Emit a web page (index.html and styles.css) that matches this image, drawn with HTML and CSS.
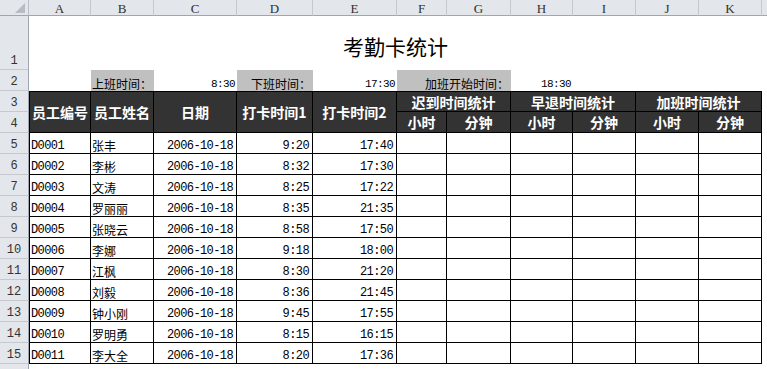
FILE: index.html
```html
<!DOCTYPE html>
<html lang="zh-CN">
<head>
<meta charset="utf-8">
<title>考勤卡统计</title>
<link rel="stylesheet" href="styles.css">
</head>
<body>
<div class="sheet">
  <!-- column headers -->
  <div class="corner"><span class="tri"></span></div>
  <div class="ch">A</div><div class="ch">B</div><div class="ch">C</div><div class="ch">D</div>
  <div class="ch">E</div><div class="ch">F</div><div class="ch">G</div><div class="ch">H</div>
  <div class="ch">I</div><div class="ch">J</div><div class="ch">K</div><div class="ch ch-end"></div>

  <!-- row 1 -->
  <div class="rh">1</div>
  <div class="title span11">考勤卡统计</div>
  <div class="blank"></div>

  <!-- row 2 -->
  <div class="rh">2</div>
  <div class="blank"></div>
  <div class="lbl left">上班时间：</div>
  <div class="val num right">8:30</div>
  <div class="lbl right">下班时间：</div>
  <div class="val num right">17:30</div>
  <div class="lbl right span2">加班开始时间：</div>
  <div class="val num ot">18:30</div>
  <div class="blank"></div><div class="blank"></div><div class="blank"></div>
  <div class="blank"></div>

  <!-- rows 3-4 header -->
  <div class="rh">3</div>
  <div class="hd hd-tall first">员工编号</div>
  <div class="hd hd-tall">员工姓名</div>
  <div class="hd hd-tall">日期</div>
  <div class="hd hd-tall">打卡时间1</div>
  <div class="hd hd-tall">打卡时间2</div>
  <div class="hd hd-top span2">迟到时间统计</div>
  <div class="hd hd-top span2">早退时间统计</div>
  <div class="hd hd-top span2">加班时间统计</div>
  <div class="blank rows2"></div>
  <div class="rh">4</div>
  <div class="hd">小时</div><div class="hd">分钟</div>
  <div class="hd">小时</div><div class="hd">分钟</div>
  <div class="hd">小时</div><div class="hd">分钟</div>

  <!-- data rows -->
  <div class="rh">5</div>
  <div class="td first num">D0001</div><div class="td">张丰</div><div class="td num right">2006-10-18</div><div class="td num right">9:20</div><div class="td num right">17:40</div>
  <div class="td"></div><div class="td"></div><div class="td"></div><div class="td"></div><div class="td"></div><div class="td"></div><div class="blank"></div>

  <div class="rh">6</div>
  <div class="td first num">D0002</div><div class="td">李彬</div><div class="td num right">2006-10-18</div><div class="td num right">8:32</div><div class="td num right">17:30</div>
  <div class="td"></div><div class="td"></div><div class="td"></div><div class="td"></div><div class="td"></div><div class="td"></div><div class="blank"></div>

  <div class="rh">7</div>
  <div class="td first num">D0003</div><div class="td">文涛</div><div class="td num right">2006-10-18</div><div class="td num right">8:25</div><div class="td num right">17:22</div>
  <div class="td"></div><div class="td"></div><div class="td"></div><div class="td"></div><div class="td"></div><div class="td"></div><div class="blank"></div>

  <div class="rh">8</div>
  <div class="td first num">D0004</div><div class="td">罗丽丽</div><div class="td num right">2006-10-18</div><div class="td num right">8:35</div><div class="td num right">21:35</div>
  <div class="td"></div><div class="td"></div><div class="td"></div><div class="td"></div><div class="td"></div><div class="td"></div><div class="blank"></div>

  <div class="rh">9</div>
  <div class="td first num">D0005</div><div class="td">张晓云</div><div class="td num right">2006-10-18</div><div class="td num right">8:58</div><div class="td num right">17:50</div>
  <div class="td"></div><div class="td"></div><div class="td"></div><div class="td"></div><div class="td"></div><div class="td"></div><div class="blank"></div>

  <div class="rh">10</div>
  <div class="td first num">D0006</div><div class="td">李娜</div><div class="td num right">2006-10-18</div><div class="td num right">9:18</div><div class="td num right">18:00</div>
  <div class="td"></div><div class="td"></div><div class="td"></div><div class="td"></div><div class="td"></div><div class="td"></div><div class="blank"></div>

  <div class="rh">11</div>
  <div class="td first num">D0007</div><div class="td">江枫</div><div class="td num right">2006-10-18</div><div class="td num right">8:30</div><div class="td num right">21:20</div>
  <div class="td"></div><div class="td"></div><div class="td"></div><div class="td"></div><div class="td"></div><div class="td"></div><div class="blank"></div>

  <div class="rh">12</div>
  <div class="td first num">D0008</div><div class="td">刘毅</div><div class="td num right">2006-10-18</div><div class="td num right">8:36</div><div class="td num right">21:45</div>
  <div class="td"></div><div class="td"></div><div class="td"></div><div class="td"></div><div class="td"></div><div class="td"></div><div class="blank"></div>

  <div class="rh">13</div>
  <div class="td first num">D0009</div><div class="td">钟小刚</div><div class="td num right">2006-10-18</div><div class="td num right">9:45</div><div class="td num right">17:55</div>
  <div class="td"></div><div class="td"></div><div class="td"></div><div class="td"></div><div class="td"></div><div class="td"></div><div class="blank"></div>

  <div class="rh">14</div>
  <div class="td first num">D0010</div><div class="td">罗明勇</div><div class="td num right">2006-10-18</div><div class="td num right">8:15</div><div class="td num right">16:15</div>
  <div class="td"></div><div class="td"></div><div class="td"></div><div class="td"></div><div class="td"></div><div class="td"></div><div class="blank"></div>

  <div class="rh">15</div>
  <div class="td first num">D0011</div><div class="td">李大全</div><div class="td num right">2006-10-18</div><div class="td num right">8:20</div><div class="td num right">17:36</div>
  <div class="td"></div><div class="td"></div><div class="td"></div><div class="td"></div><div class="td"></div><div class="td"></div><div class="blank"></div>

  <!-- partial row 16 -->
  <div class="rh rh-last"></div>
  <div class="blank span12"></div>
</div>
</body>
</html>
```

FILE: styles.css
```css
* { box-sizing: border-box; }

html, body {
  margin: 0;
  padding: 0;
  background: #ffffff;
  overflow: hidden;
}

body {
  width: 767px;
  height: 369px;
  font-family: "Noto Sans CJK SC", "Noto Sans", sans-serif;
  font-size: 12px;
  color: #000;
}

.sheet {
  display: grid;
  width: 767px;
  height: 369px;
  grid-template-columns: 29px 62px 63px 83px 76px 84px 50px 64px 62px 63px 63px 63px 1fr;
  grid-template-rows: 16px 54px 21px 21px 21px repeat(11, 21px) 1fr;
  overflow: hidden;
}

/* ---------- headers ---------- */
.corner {
  position: relative;
  background: #e3e6ea;
  border-right: 1px solid #b9bec6;
  border-bottom: 1px solid #9ea6b0;
}
.corner .tri {
  position: absolute;
  right: 3px;
  bottom: 2px;
  width: 0;
  height: 0;
  border-left: 10px solid transparent;
  border-bottom: 10px solid #b7bcc2;
}

.ch {
  background: #e3e6ea;
  border-right: 1px solid #c5c9cf;
  border-bottom: 1px solid #9ea6b0;
  font-family: "Liberation Serif", "DejaVu Serif", serif;
  font-size: 13px;
  color: #303030;
  display: flex;
  align-items: center;
  justify-content: center;
  line-height: 1;
  padding-top: 1px;
}
.ch-end { border-right: none; }

.rh {
  background: #e3e6ea;
  border-right: 1px solid #9ea6b0;
  border-bottom: 1px solid #c5c9cf;
  font-family: "Liberation Mono", "DejaVu Sans Mono", monospace;
  font-size: 12px;
  color: #333;
  display: flex;
  align-items: flex-end;
  justify-content: center;
  padding-bottom: 2px;
  line-height: 1;
}
.rh-last { border-bottom: none; }

/* ---------- generic cells ---------- */
.blank { background: #ffffff; }
.span11 { grid-column: span 11; }
.span12 { grid-column: span 12; }
.span2 { grid-column: span 2; }
.rows2 { grid-row: span 2; }

.title {
  display: flex;
  align-items: center;
  justify-content: center;
  padding-top: 5px;
  font-size: 21px;
  font-weight: 400;
  color: #000;
}

.lbl, .val {
  display: flex;
  align-items: flex-end;
  padding: 0 2px 1px 1px;
  line-height: 1;
  white-space: nowrap;
  font-size: 12px;
}
.lbl { background: #c0c0c0; }
.left { justify-content: flex-start; }
.right { justify-content: flex-end; }
.ot { padding-left: 30px; }

.num {
  font-family: "Liberation Mono", "DejaVu Sans Mono", monospace;
  font-size: 11px;
  letter-spacing: -0.6px;
}

/* ---------- table header ---------- */
.hd {
  background: #333333;
  color: #ffffff;
  font-weight: 700;
  font-size: 14px;
  border-right: 1px solid #000;
  border-bottom: 1px solid #000;
  display: flex;
  align-items: center;
  justify-content: center;
  line-height: 1;
  white-space: nowrap;
}
.hd-tall { grid-row: span 2; border-top: 1px solid #000; }
.hd-top { border-top: 1px solid #000; }
.hd.first { border-left: 1px solid #000; }

/* ---------- data ---------- */
.td {
  border-right: 1px solid #000;
  border-bottom: 1px solid #000;
  display: flex;
  align-items: flex-end;
  padding: 0 3px 1px 1px;
  line-height: 1;
  white-space: nowrap;
  font-size: 12px;
}
.td.first { border-left: 1px solid #000; }
```
